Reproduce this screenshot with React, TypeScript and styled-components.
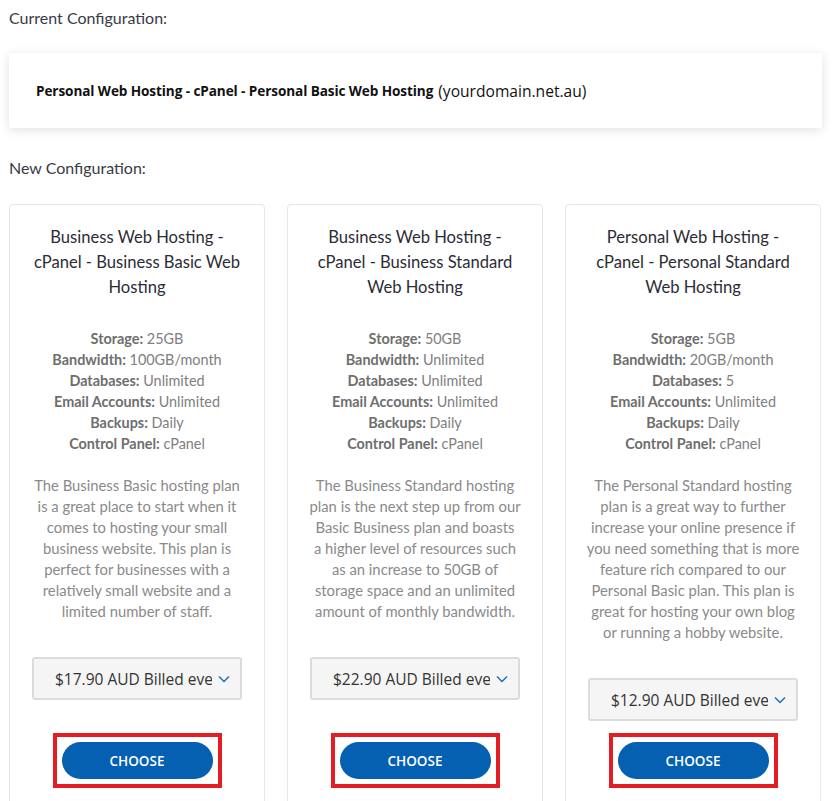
import React from "react";
import styled, { createGlobalStyle } from "styled-components";

const GlobalStyle = createGlobalStyle`
  html, body { margin: 0; padding: 0; background: #ffffff; }
  body { font-family: "Lato", "Noto Sans", sans-serif; color: #333; }
  * { box-sizing: border-box; }
`;

const Page = styled.div`
  padding: 7px 10px 0 9px;
  width: 832px;
`;

const SectionLabel = styled.div`
  font-family: "Lato", sans-serif;
  font-size: 16px;
  line-height: 22px;
  color: #3a3a44;
`;

const CurrentBox = styled.div`
  margin-top: 24px;
  margin-bottom: 29px;
  height: 75px;
  background: #fff;
  box-shadow: 0 2px 10px rgba(0, 0, 0, 0.12);
  display: flex;
  align-items: center;
  padding: 0 0 0 27px;
`;

const CurrentName = styled.span`
  font-family: "Open Sans", sans-serif;
  font-weight: 700;
  font-size: 13.6px;
  color: #111;
  letter-spacing: -0.1px;
`;

const Domain = styled.span`
  font-family: "Open Sans", sans-serif;
  font-size: 15.6px;
  color: #111;
  margin-left: 5px;
`;

const Cards = styled.div`
  margin-top: 25px;
  display: grid;
  grid-template-columns: repeat(3, 256px);
  column-gap: 22px;
  align-items: stretch;
`;

const Card = styled.div`
  border: 1px solid #e6e6e6;
  border-radius: 4px;
  padding: 20px 22px 20px;
  display: flex;
  flex-direction: column;
  align-items: center;
  text-align: center;
`;

const Title = styled.div`
  font-size: 16.6px;
  line-height: 25px;
  color: #2c2c36;
`;

const Specs = styled.div`
  margin-top: 28px;
  font-size: 14.4px;
  line-height: 21px;
  color: #808080;
`;

const Label = styled.b`
  font-weight: 700;
  color: #6e6e6e;
`;

const Desc = styled.p`
  margin: 21px 0 0;
  font-size: 14.8px;
  line-height: 21px;
  color: #8a8a8a;
  white-space: nowrap;
`;

const Select = styled.div`
  margin-top: 35px;
  margin-bottom: 12px;
  width: 210px;
  height: 43px;
  background: #f5f5f5;
  border: 2px solid #dcdcdc;
  border-radius: 3px;
  display: flex;
  align-items: center;
  padding: 0 0 0 21px;
`;

const SelectText = styled.span`
  font-family: "Open Sans", sans-serif;
  font-size: 15.5px;
  color: #333;
  width: 157px;
  overflow: hidden;
  white-space: nowrap;
  text-align: left;
`;

const Chevron = styled.svg`
  margin-left: 6px;
  flex: none;
`;

const Highlight = styled.div`
  margin-top: auto;
  border: 4px solid #e41d25;
  padding: 5px;
  display: flex;
`;

const ChooseButton = styled.button`
  width: 151px;
  height: 37px;
  border: none;
  border-radius: 19px;
  background: #0560b2;
  color: #fff;
  font-family: "Open Sans", sans-serif;
  font-weight: 600;
  font-size: 13.5px;
  cursor: pointer;
`;

type Plan = {
  title: string[];
  specs: [string, string][];
  desc: string[];
  price: string;
};

const plans: Plan[] = [
  {
    title: ["Business Web Hosting -", "cPanel - Business Basic Web", "Hosting"],
    specs: [
      ["Storage:", "25GB"],
      ["Bandwidth:", "100GB/month"],
      ["Databases:", "Unlimited"],
      ["Email Accounts:", "Unlimited"],
      ["Backups:", "Daily"],
      ["Control Panel:", "cPanel"],
    ],
    desc: [
      "The Business Basic hosting plan",
      "is a great place to start when it",
      "comes to hosting your small",
      "business website. This plan is",
      "perfect for businesses with a",
      "relatively small website and a",
      "limited number of staff.",
    ],
    price: "$17.90 AUD Billed every month",
  },
  {
    title: ["Business Web Hosting -", "cPanel - Business Standard", "Web Hosting"],
    specs: [
      ["Storage:", "50GB"],
      ["Bandwidth:", "Unlimited"],
      ["Databases:", "Unlimited"],
      ["Email Accounts:", "Unlimited"],
      ["Backups:", "Daily"],
      ["Control Panel:", "cPanel"],
    ],
    desc: [
      "The Business Standard hosting",
      "plan is the next step up from our",
      "Basic Business plan and boasts",
      "a higher level of resources such",
      "as an increase to 50GB of",
      "storage space and an unlimited",
      "amount of monthly bandwidth.",
    ],
    price: "$22.90 AUD Billed every month",
  },
  {
    title: ["Personal Web Hosting -", "cPanel - Personal Standard", "Web Hosting"],
    specs: [
      ["Storage:", "5GB"],
      ["Bandwidth:", "20GB/month"],
      ["Databases:", "5"],
      ["Email Accounts:", "Unlimited"],
      ["Backups:", "Daily"],
      ["Control Panel:", "cPanel"],
    ],
    desc: [
      "The Personal Standard hosting",
      "plan is a great way to further",
      "increase your online presence if",
      "you need something that is more",
      "feature rich compared to our",
      "Personal Basic plan. This plan is",
      "great for hosting your own blog",
      "or running a hobby website.",
    ],
    price: "$12.90 AUD Billed every month",
  },
];

const withBreaks = (lines: string[]) =>
  lines.map((l, i) => (
    <React.Fragment key={i}>
      {l}
      {i < lines.length - 1 && <br />}
    </React.Fragment>
  ));

export default function App() {
  return (
    <>
      <GlobalStyle />
      <Page>
        <SectionLabel>Current Configuration:</SectionLabel>
        <CurrentBox>
          <CurrentName>Personal Web Hosting - cPanel - Personal Basic Web Hosting</CurrentName>
          <Domain>(yourdomain.net.au)</Domain>
        </CurrentBox>
        <SectionLabel>New Configuration:</SectionLabel>
        <Cards>
          {plans.map((p, i) => (
            <Card key={i}>
              <Title>{withBreaks(p.title)}</Title>
              <Specs>
                {p.specs.map(([k, v], j) => (
                  <div key={j}>
                    <Label>{k}</Label> {v}
                  </div>
                ))}
              </Specs>
              <Desc>{withBreaks(p.desc)}</Desc>
              <Select>
                <SelectText>{p.price}</SelectText>
                <Chevron width="12" height="8" viewBox="0 0 12 8">
                  <path d="M1 1.5 L6 6.5 L11 1.5" fill="none" stroke="#1f6fb5" strokeWidth="1.5" />
                </Chevron>
              </Select>
              <Highlight>
                <ChooseButton>CHOOSE</ChooseButton>
              </Highlight>
            </Card>
          ))}
        </Cards>
      </Page>
    </>
  );
}
